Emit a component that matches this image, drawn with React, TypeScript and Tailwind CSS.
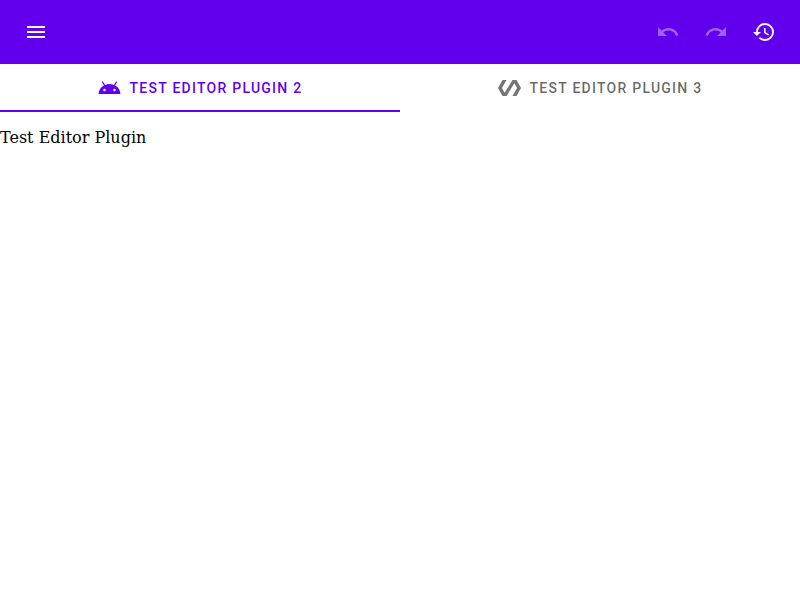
import React from "react";

const icons = {
  menu: "M3 18h18v-2H3v2zm0-5h18v-2H3v2zm0-7v2h18V6H3z",
  undo: "M12.5 8c-2.65 0-5.05.99-6.9 2.6L2 7v9h9l-3.62-3.62c1.39-1.16 3.16-1.88 5.12-1.88 3.54 0 6.55 2.31 7.6 5.5l2.37-.78C21.08 11.03 17.15 8 12.5 8z",
  redo: "M18.4 10.6C16.55 8.99 14.15 8 11.5 8c-4.65 0-8.58 3.03-9.96 7.22L3.9 16c1.05-3.19 4.05-5.5 7.6-5.5 1.95 0 3.73.72 5.12 1.88L13 16h9V7l-3.6 3.6z",
  history:
    "M13 3a9 9 0 0 0-9 9H1l3.89 3.89.07.14L9 12H6c0-3.87 3.13-7 7-7s7 3.13 7 7-3.13 7-7 7c-1.93 0-3.68-.79-4.94-2.06l-1.42 1.42A8.954 8.954 0 0 0 13 21a9 9 0 0 0 0-18zm-1 5v5l4.28 2.54.72-1.21-3.5-2.08V8H12z",
  android:
    "M17.6 9.48l1.84-3.18c.16-.31.04-.69-.26-.85a.637.637 0 0 0-.83.22l-1.88 3.24a11.463 11.463 0 0 0-8.94 0L5.65 5.67a.643.643 0 0 0-.87-.2c-.28.18-.37.54-.22.83L6.4 9.48A10.78 10.78 0 0 0 1 18h22a10.78 10.78 0 0 0-5.4-8.52zM7 15.25a1.25 1.25 0 1 1 0-2.5 1.25 1.25 0 0 1 0 2.5zm10 0a1.25 1.25 0 1 1 0-2.5 1.25 1.25 0 0 1 0 2.5z",
  polymer:
    "M19 4h-4L7.11 16.63 4.5 12 9 4H5L.5 12 5 20h4l7.89-12.63L19.5 12 15 20h4l4.5-8z",
};

function Icon({ name, viewBox = "0 0 24 24" }: { name: keyof typeof icons; viewBox?: string }) {
  return (
    <svg viewBox={viewBox} className="size-6 shrink-0" fill="currentColor" aria-hidden="true">
      <path d={icons[name]} />
    </svg>
  );
}

function IconButton({ name, label, disabled = false }: { name: keyof typeof icons; label: string; disabled?: boolean }) {
  return (
    <button aria-label={label} disabled={disabled} className="flex size-12 items-center justify-center text-white disabled:opacity-38">
      <Icon name={name} />
    </button>
  );
}

function Tab({ icon, label, active = false }: { icon: keyof typeof icons; label: string; active?: boolean }) {
  return (
    <button role="tab" aria-selected={active} className="flex h-12 flex-1 flex-col">
      <span className="flex h-12 w-full items-center justify-center">
        <span className={active ? "text-[#6200ee]" : "text-black/54"}>
          <Icon name={icon} viewBox="0.5 0 24 24" />
        </span>
        <span
          className={`pl-2 font-[Roboto,sans-serif] text-sm font-medium tracking-[1.25px] uppercase ${active ? "text-[#6200ee]" : "text-black/60"}`}
        >
          {label}
        </span>
      </span>
      {active && <span className="-mt-0.5 h-0.5 w-full bg-[#6200ee]" />}
    </button>
  );
}

export default function App() {
  return (
    <div className="min-h-screen bg-white">
      <header className="flex h-16 items-center justify-between bg-[#6200ee] px-3">
        <IconButton name="menu" label="Menu" />
        <div className="flex">
          <IconButton name="undo" label="Undo" disabled />
          <IconButton name="redo" label="Redo" disabled />
          <IconButton name="history" label="History" />
        </div>
      </header>
      <div role="tablist" className="flex">
        <Tab icon="android" label="Test Editor Plugin 2" active />
        <Tab icon="polymer" label="Test Editor Plugin 3" />
      </div>
      <p className="mt-4 font-['DejaVu_Serif',serif] text-base leading-[19px] text-black">Test Editor Plugin</p>
    </div>
  );
}
